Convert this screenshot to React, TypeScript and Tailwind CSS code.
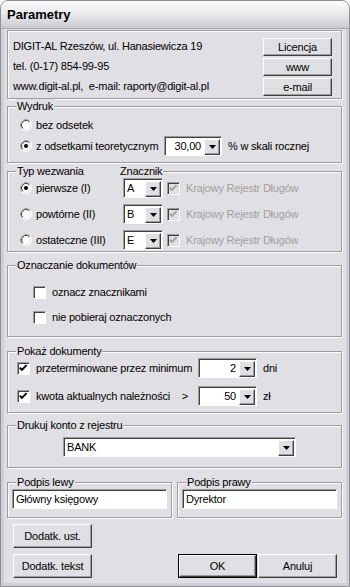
import React from "react";

const face = "bg-[#e0dfe3]";
const raised =
  "border border-t-white border-l-white border-r-[#404040] border-b-[#404040] shadow-[inset_-1px_-1px_0_#9d9da1]";
const sunken =
  "border border-t-[#9d9da1] border-l-[#9d9da1] border-b-white border-r-white shadow-[inset_1px_1px_0_#404040]";
const etched = "border border-[#9d9da1] shadow-[inset_1px_1px_0_#fff,1px_1px_0_#fff]";

const Arrow = () => (
  <svg width="7" height="4" viewBox="0 0 7 4">
    <polygon points="0,0 7,0 3.5,4" fill="#000" />
  </svg>
);

const Combo = ({
  value,
  className = "",
  right = false,
}: {
  value: string;
  className?: string;
  right?: boolean;
}) => (
  <div className={`flex items-center h-[20px] bg-white ${sunken} ${className}`}>
    <span className={`flex-1 px-[3px] leading-none ${right ? "text-right" : ""}`}>{value}</span>
    <div className={`flex items-center justify-center w-[16px] h-[16px] mr-[1px] mt-[1px] ${face} ${raised}`}>
      <Arrow />
    </div>
  </div>
);

const Radio = ({ checked = false }: { checked?: boolean }) => (
  <svg width="12" height="12" viewBox="0 0 12 12" className="shrink-0">
    <circle cx="6" cy="6" r="5.5" fill="#fff" stroke="#fff" />
    <path d="M2.11 9.89 A5.5 5.5 0 0 1 9.89 2.11" stroke="#9d9da1" fill="none" />
    <circle cx="6" cy="6" r="4.5" fill="#fff" stroke="#e0dfe3" />
    <path d="M2.82 9.18 A4.5 4.5 0 0 1 9.18 2.82" stroke="#404040" fill="none" />
    {checked && <circle cx="6" cy="6" r="2" fill="#000" />}
  </svg>
);

const Check = ({ checked = false, disabled = false }: { checked?: boolean; disabled?: boolean }) => (
  <div className={`w-[13px] h-[13px] shrink-0 ${sunken} ${disabled ? face : "bg-white"}`}>
    {checked && (
      <svg width="11" height="11" viewBox="0 0 11 11">
        <polyline
          points="1.8,4.6 3.9,6.9 8.6,2.2"
          fill="none"
          stroke={disabled ? "#a0a0a0" : "#000"}
          strokeWidth="1.9"
        />
      </svg>
    )}
  </div>
);

const Group = ({
  label,
  className = "",
  children,
}: {
  label: React.ReactNode;
  className?: string;
  children: React.ReactNode;
}) => (
  <fieldset className={`${etched} pl-[8px] ${className}`}>
    <legend className={`px-[1px] leading-[14px] ${face}`}>{label}</legend>
    {children}
  </fieldset>
);

const Button = ({ label, className = "" }: { label: string; className?: string }) => (
  <div className={`flex items-center justify-center ${face} ${raised} ${className}`}>{label}</div>
);

export default function App() {
  return (
    <div className="w-[350px] h-[587px] flex flex-col rounded-t-[8px] border border-[#8e8f94] bg-[#cfd0d6] overflow-hidden font-['Liberation_Sans',Arial,sans-serif] text-[11px] tracking-[-0.2px] text-black">
      <div className="h-[28px] shrink-0 flex items-center pl-[6px] bg-linear-to-b from-[#fbfbfc] via-[#e9e9ec] to-[#c9cad0] border-b border-[#a7a8ae]">
        <span className="text-[13px] font-bold tracking-normal">Parametry</span>
      </div>

      <div className={`flex-1 mx-[3px] mb-[3px] pl-[3px] pr-[4px] flex flex-col ${face}`}>
        {/* dane firmy */}
        <div className={`mt-[1px] h-[69px] flex justify-between pl-[5px] pr-[9px] ${etched}`}>
          <div className="flex flex-col pt-[5px] leading-[20px]">
            <span>DIGIT-AL Rzeszów, ul. Hanasiewicza 19</span>
            <span>tel. (0-17) 854-99-95</span>
            <span>www.digit-al.pl,&nbsp; e-mail: raporty@digit-al.pl</span>
          </div>
          <div className="flex flex-col gap-[2px] pt-[7px]">
            <Button label="Licencja" className="w-[69px] h-[18px]" />
            <Button label="www" className="w-[69px] h-[18px]" />
            <Button label="e-mail" className="w-[69px] h-[18px]" />
          </div>
        </div>

        <Group label="Wydruk" className="pt-[2px] pb-[6px]">
          <div className="flex flex-col gap-[1px] ml-[4px]">
            <div className="flex items-center h-[20px] gap-[4px]">
              <Radio />
              <span>bez odsetek</span>
            </div>
            <div className="flex items-center h-[20px]">
              <Radio checked />
              <span className="w-[128px] ml-[4px]">z odsetkami teoretycznym</span>
              <Combo value="30,00" right className="w-[58px]" />
              <span className="ml-[6px]">% w skali rocznej</span>
            </div>
          </div>
        </Group>

        <Group
          label={
            <span className="flex">
              <span className="w-[103px]">Typ wezwania</span>
              <span>Znacznik</span>
            </span>
          }
          className="mt-[1px] pb-[1px]"
        >
          <div className="flex flex-col gap-[6px] ml-[4px]">
            {[
              ["pierwsze (I)", "A", true],
              ["powtórne (II)", "B", false],
              ["ostateczne (III)", "E", false],
            ].map(([label, mark, on]) => (
              <div key={label as string} className="flex items-center h-[20px]">
                <Radio checked={on as boolean} />
                <span className="w-[87px] ml-[4px]">{label}</span>
                <Combo value={mark as string} className="w-[40px]" />
                <div className="ml-[4px]">
                  <Check checked disabled />
                </div>
                <span className="ml-[6px] text-[#a0a0a0]">Krajowy Rejestr Długów</span>
              </div>
            ))}
          </div>
        </Group>

        <Group label="Oznaczanie dokumentów" className="mt-[6px] pt-[10px] pb-[9px]">
          <div className="flex flex-col gap-[5px] ml-[17px]">
            <div className="flex items-center h-[20px] gap-[6px]">
              <Check />
              <span>oznacz znacznikami</span>
            </div>
            <div className="flex items-center h-[20px] gap-[6px]">
              <Check />
              <span>nie pobieraj oznaczonych</span>
            </div>
          </div>
        </Group>

        <Group label="Pokaż dokumenty" className="mt-[7px] pb-[6px]">
          <div className="flex flex-col gap-[8px] ml-[1px]">
            <div className="flex items-center h-[20px]">
              <Check checked />
              <span className="w-[162px] ml-[6px]">przeterminowane przez minimum</span>
              <Combo value="2" right className="w-[59px]" />
              <span className="ml-[6px]">dni</span>
            </div>
            <div className="flex items-center h-[20px]">
              <Check checked />
              <span className="w-[162px] ml-[6px] flex justify-between pr-[10px]">
                <span>kwota aktualnych należności</span>
                <span>&gt;</span>
              </span>
              <Combo value="50" right className="w-[59px]" />
              <span className="ml-[6px]">zł</span>
            </div>
          </div>
        </Group>

        <Group label="Drukuj konto z rejestru" className="mt-[5px] pt-[5px] pb-[10px]">
          <Combo value="BANK" className="w-[233px] ml-[47px]" />
        </Group>

        <div className="mt-[7px] flex gap-[5px]">
          <fieldset className={`${etched} flex-1 px-[4px] pb-[8px]`}>
            <legend className={`ml-[4px] px-[1px] leading-[14px] ${face}`}>Podpis lewy</legend>
            <div className={`h-[20px] flex items-center px-[3px] bg-white ${sunken}`}>Główny księgowy</div>
          </fieldset>
          <fieldset className={`${etched} flex-1 px-[4px] pb-[8px]`}>
            <legend className={`ml-[4px] px-[1px] leading-[14px] ${face}`}>Podpis prawy</legend>
            <div className={`h-[20px] flex items-center px-[3px] bg-white ${sunken}`}>Dyrektor</div>
          </fieldset>
        </div>

        <div className="mt-[6px] ml-[6px] flex flex-col gap-[6px]">
          <Button label="Dodatk. ust." className="w-[79px] h-[24px]" />
          <div className="flex">
            <Button label="Dodatk. tekst" className="w-[79px] h-[24px]" />
            <div className="ml-[86px] border border-black">
              <Button label="OK" className="w-[77px] h-[22px]" />
            </div>
            <Button label="Anuluj" className="w-[79px] h-[24px] ml-[1px]" />
          </div>
        </div>
      </div>
    </div>
  );
}
